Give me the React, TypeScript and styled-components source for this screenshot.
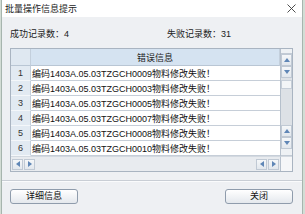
import React from 'react';
import styled, { createGlobalStyle } from 'styled-components';

const Global = createGlobalStyle`
  html, body { margin: 0; padding: 0; }
  body {
    width: 305px; height: 214px; overflow: hidden;
    background: #d3ddd5;
    font-family: "Liberation Sans", "Noto Sans CJK SC", sans-serif;
    color: #1a1a1a;
  }
  * { box-sizing: border-box; }
`;

const Page = styled.div`
  width: 305px; height: 214px; padding-left: 1px; display: flex;
`;

const Dialog = styled.div`
  width: 302px; height: 216px;
  border-left: 1px solid #a7b5ae; border-right: 1px solid #a7b5ae;
  background: #eef0f3;
  display: flex; flex-direction: column;
`;

const TitleBar = styled.div`
  height: 17px; flex: none; background: #ffffff;
  display: flex; align-items: center; justify-content: space-between;
  padding: 0 6px 0 3px;
  font-size: 9px; color: #222;
`;

const Content = styled.div`
  padding: 0 9px 0 8px; display: flex; flex-direction: column;
`;

const Stats = styled.div`
  margin-top: 9px; height: 15px;
  display: grid; grid-template-columns: 157px auto; align-items: center;
  font-size: 9px; color: #222; padding-left: 0;
`;

const Table = styled.div`
  margin-top: 7px;
  border: 1px solid #a9b4c1;
  background: #ffffff;
  display: grid;
  grid-template-columns: 20px 1fr 12px;
  grid-template-rows: 17px repeat(6, 15px) 15px;
`;

const HeadCell = styled.div<{ $corner?: boolean }>`
  background: ${p => (p.$corner ? '#dfe8f1' : '#d5e3f1')};
  border-right: 1px solid #c3cfdc; border-bottom: 1px solid #b9c6d4;
  display: flex; align-items: center; justify-content: center;
  font-size: 9px; color: #222;
`;

const RowNum = styled.div`
  background: #e2eaf2;
  border-right: 1px solid #c3cfdc; border-bottom: 1px solid #f4f7fa;
  display: flex; align-items: center; justify-content: center;
  font-size: 9px; color: #333;
`;

const DataCell = styled.div`
  background: #ffffff;
  border-bottom: 1px solid #c6ced8;
  display: flex; align-items: center; padding-left: 1px;
  font-size: 9px; color: #111; white-space: nowrap; overflow: hidden;
`;

const VScroll = styled.div`
  grid-row: 1 / 8; grid-column: 3;
  border-left: 1px solid #b6c0cc;
  background: #dde1e6;
  display: flex; flex-direction: column;
`;

const VCap = styled.div<{ $h: number }>`
  height: ${p => p.$h}px; flex: none;
  background: #eef1f4; border-bottom: 1px solid #c2cad4;
`;

const VThumb = styled.div`
  height: 9px; flex: none; margin-top: 2px;
  background: #f3f5f7; border: 1px solid #c6ced8;
`;

const Track = styled.div`
  flex: 1;
`;

const ArrowBtn = styled.div<{ $w: number; $h: number }>`
  width: ${p => p.$w}px; height: ${p => p.$h}px; flex: none;
  background: linear-gradient(#f5f7f9, #e2e7ed);
  border: 1px solid #c0c9d4;
  display: flex; align-items: center; justify-content: center;
`;

const HScroll = styled.div`
  grid-row: 8; grid-column: 1 / 3;
  background: #e8ebef;
  border-top: 1px solid #d3d9e0;
  display: flex; align-items: center; justify-content: space-between;
  padding: 0 1px 0 1px;
`;

const ArrowPair = styled.div`
  display: flex; gap: 1px;
`;

const Corner = styled.div`
  grid-row: 8; grid-column: 3;
  background: #f5f6f8;
  border-left: 1px solid #b6c0cc;
  border-top: 1px solid #d3d9e0;
`;

const Separator = styled.div`
  margin-top: 8px; height: 2px; flex: none;
  border-top: 1px solid #c9ced5; border-bottom: 1px solid #fafbfc;
`;

const ButtonBar = styled.div`
  padding: 7px 9px 0 8px;
  display: flex; justify-content: space-between;
`;

const Button = styled.button`
  width: 68px; height: 15px; padding: 0;
  border: 1px solid #8f9cac; border-radius: 3px;
  background: linear-gradient(#ffffff, #e4e8ed);
  font-family: "Liberation Sans", "Noto Sans CJK SC", sans-serif;
  font-size: 9px; color: #111; line-height: 13px;
`;

const Tri = ({ dir }: { dir: 'up' | 'down' | 'left' | 'right' }) => {
  const d = {
    up: 'M0 4L3 0L6 4Z',
    down: 'M0 0L6 0L3 4Z',
    left: 'M4 0L4 6L0 3Z',
    right: 'M0 0L4 3L0 6Z',
  }[dir];
  const horiz = dir === 'left' || dir === 'right';
  return (
    <svg width={horiz ? 4 : 6} height={horiz ? 6 : 4} viewBox={horiz ? '0 0 4 6' : '0 0 6 4'}>
      <path d={d} fill="#5f86b6" />
    </svg>
  );
};

const Close = () => (
  <svg width="9" height="9" viewBox="0 0 9 9">
    <path d="M0.5 0.5L8.5 8.5M8.5 0.5L0.5 8.5" stroke="#3a3a3a" strokeWidth="0.9" />
  </svg>
);

const rows = ['0009', '0003', '0005', '0007', '0008', '0010'];

export default function App() {
  return (
    <>
      <Global />
      <Page>
        <Dialog>
          <TitleBar>
            <span>批量操作信息提示</span>
            <Close />
          </TitleBar>
          <Content>
            <Stats>
              <span>成功记录数：4</span>
              <span>失败记录数：31</span>
            </Stats>
            <Table>
              <HeadCell $corner />
              <HeadCell>错误信息</HeadCell>
              {rows.map((code, i) => (
                <React.Fragment key={code}>
                  <RowNum>{i + 1}</RowNum>
                  <DataCell>编码1403A.05.03TZGCH{code}物料修改失败！</DataCell>
                </React.Fragment>
              ))}
              <VScroll>
                <VCap $h={5} />
                <ArrowBtn $w={11} $h={12}><Tri dir="up" /></ArrowBtn>
                <ArrowBtn $w={11} $h={12}><Tri dir="down" /></ArrowBtn>
                <VThumb />
                <Track />
                <ArrowBtn $w={11} $h={12}><Tri dir="up" /></ArrowBtn>
                <ArrowBtn $w={11} $h={12}><Tri dir="down" /></ArrowBtn>
                <VCap $h={7} />
              </VScroll>
              <HScroll>
                <ArrowPair>
                  <ArrowBtn $w={11} $h={11}><Tri dir="left" /></ArrowBtn>
                  <ArrowBtn $w={11} $h={11}><Tri dir="right" /></ArrowBtn>
                </ArrowPair>
                <ArrowPair>
                  <ArrowBtn $w={11} $h={11}><Tri dir="left" /></ArrowBtn>
                  <ArrowBtn $w={11} $h={11}><Tri dir="right" /></ArrowBtn>
                </ArrowPair>
              </HScroll>
              <Corner />
            </Table>
          </Content>
          <Separator />
          <ButtonBar>
            <Button>详细信息</Button>
            <Button>关闭</Button>
          </ButtonBar>
        </Dialog>
      </Page>
    </>
  );
}
